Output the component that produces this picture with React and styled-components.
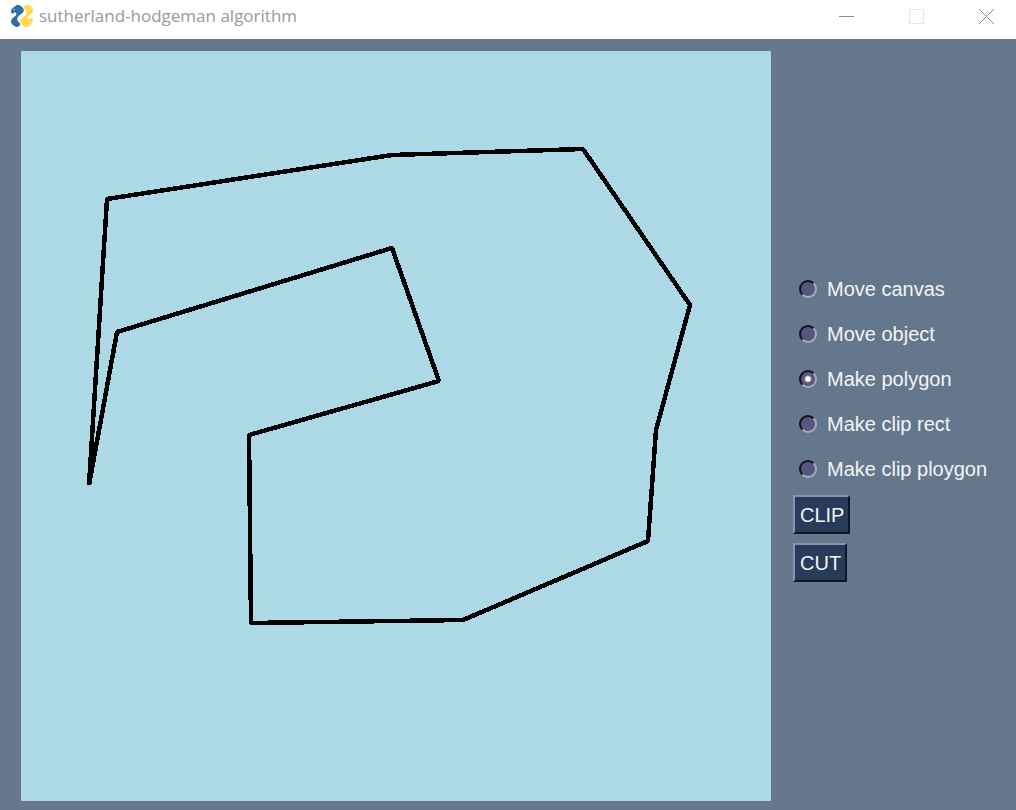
import React, { useState } from 'react';
import styled, { createGlobalStyle } from 'styled-components';

const GlobalStyle = createGlobalStyle`
  * { box-sizing: border-box; }
  body { margin: 0; background: #64778d; }
`;

const Window = styled.div`
  display: flex;
  flex-direction: column;
  min-height: 100vh;
  background: #64778d;
  font-family: "Liberation Sans", Arial, sans-serif;
`;

const TitleBar = styled.header`
  display: flex;
  align-items: center;
  height: 39px;
  padding: 0 0 7px 10px;
  background: #ffffff;
`;

const Logo = styled.svg`
  flex: none;
  width: 24px;
  height: 24px;
`;

const Title = styled.h1`
  flex: 1;
  margin: 0;
  padding-left: 5px;
  font: 400 17px/32px "Open Sans", "Noto Sans", sans-serif;
  color: #999999;
  white-space: nowrap;
`;

const WindowButton = styled.button`
  display: flex;
  align-items: center;
  justify-content: center;
  width: 70px;
  height: 32px;
  padding: 0;
  border: 0;
  background: transparent;
  color: ${(p) => (p.$dim ? '#e6e6e6' : '#8c8c8c')};

  &:last-child {
    width: 60px;
    padding-left: 10px;
  }
`;

const WindowControls = styled.div`
  display: flex;
  padding-right: 0;

  ${WindowButton} {
    width: 70px;
    padding-left: 10px;
  }
`;

const Workspace = styled.main`
  flex: 1;
  display: flex;
  align-items: center;
  gap: 22px;
  padding: 12px 0 9px 21px;
`;

const Canvas = styled.svg`
  display: block;
  flex: 1;
  min-width: 0;
  aspect-ratio: 1;
  background: #add8e6;
`;

const Sidebar = styled.form`
  flex: 0 0 223px;
  display: flex;
  flex-direction: column;
  align-items: flex-start;
  gap: 9px;
  padding-bottom: 4px;
`;

const ModeList = styled.fieldset`
  margin: 0 0 -5px;
  padding: 0;
  border: 0;
`;

const Mode = styled.label`
  display: flex;
  align-items: center;
  gap: 10px;
  height: 45px;
  padding-left: 6px;
  font-size: 20px;
  line-height: 24px;
  color: #f4f4f4;
  white-space: nowrap;
`;

const Radio = styled.input`
  appearance: none;
  width: 18px;
  height: 18px;
  margin: 0;
  border: 2px solid;
  border-color: #101418 #a3aebb #a3aebb #101418;
  border-radius: 50%;
  background: #59557e;

  &:checked {
    background: radial-gradient(circle, #ffffff 2px, #59557e 4px);
  }
`;

const Action = styled.button`
  height: 39px;
  padding: 0 4px 0 5px;
  border: 2px solid;
  border-color: #8795ab #10161f #10161f #8795ab;
  background: #283b5b;
  color: #f4f4f4;
  font: 20px/24px "Liberation Sans", Arial, sans-serif;
`;

const modes = ['Move canvas', 'Move object', 'Make polygon', 'Make clip rect', 'Make clip ploygon'];

const outline = [
  [68, 434], [86, 148], [371, 104], [562, 98], [669, 254], [635, 379], [627, 490],
  [442, 569], [230, 572], [228, 384], [418, 330], [371, 197], [96, 281], [68, 434],
];

const snake =
  'M33 31C33 25 37 23 42 19C46 15 49 12 54 12C59 12 62 16 66 19C71 23 72 27 71 32C69 39 61 41 56 46C51 51 51 57 54 62C56 66 60 67 61 70C60 75 55 79 50 79C45 79 42 75 38 72C34 69 33 65 33 60C34 52 42 50 47 45C50 42 50 37 46 35C42 36 39 41 36 39C34 37 33 34 33 31Z';

export default function App() {
  const [mode, setMode] = useState('Make polygon');
  return (
    <>
      <GlobalStyle />
      <Window>
        <TitleBar>
          <Logo viewBox="30 10 72 72" aria-hidden="true">
            <path d={snake} fill="#ffd94a" transform="rotate(180 66 45.5)" />
            <path d={snake} fill="#306fa3" />
            <circle cx="42" cy="27" r="2" fill="#ffffff" />
            <circle cx="90" cy="64" r="2" fill="#ffffff" />
          </Logo>
          <Title>sutherland-hodgeman algorithm</Title>
          <WindowControls>
            <WindowButton type="button" aria-label="Minimize">
              <svg width="15" height="15" stroke="currentColor"><path d="M0 7.5H15" /></svg>
            </WindowButton>
            <WindowButton type="button" aria-label="Maximize" $dim>
              <svg width="15" height="15" fill="none" stroke="currentColor"><path d="M.5 .5H14.5V14.5H.5Z" /></svg>
            </WindowButton>
            <WindowButton type="button" aria-label="Close">
              <svg width="15" height="15" stroke="currentColor"><path d="M0 0L15 15M15 0L0 15" /></svg>
            </WindowButton>
          </WindowControls>
        </TitleBar>
        <Workspace>
          <Canvas viewBox="0 0 750 750" role="img" aria-label="Polygon">
            <polyline
              points={outline.map((p) => p.join(',')).join(' ')}
              fill="none"
              stroke="#000000"
              strokeWidth="4.5"
              strokeLinejoin="bevel"
              shapeRendering="crispEdges"
            />
          </Canvas>
          <Sidebar onSubmit={(e) => e.preventDefault()}>
            <ModeList aria-label="Mode">
              {modes.map((name) => (
                <Mode key={name}>
                  <Radio type="radio" name="mode" checked={mode === name} onChange={() => setMode(name)} />
                  {name}
                </Mode>
              ))}
            </ModeList>
            <Action type="button">CLIP</Action>
            <Action type="button">CUT</Action>
          </Sidebar>
        </Workspace>
      </Window>
    </>
  );
}
